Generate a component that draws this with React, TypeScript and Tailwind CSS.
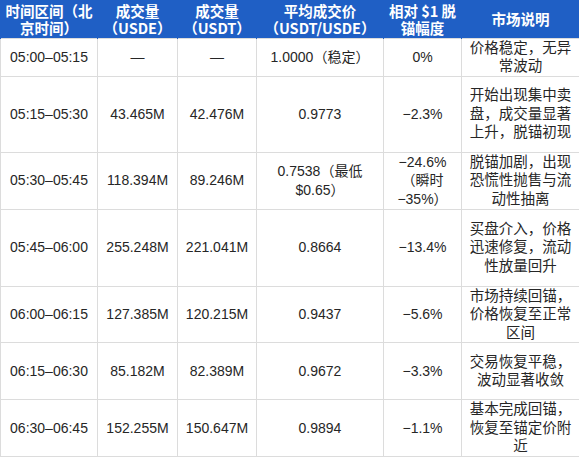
import React from "react";

type Row = {
  h: string;
  time: string;
  usde: string;
  usdt: string;
  avg: React.ReactNode;
  dev: React.ReactNode;
  desc: string;
};

const rows: Row[] = [
  { h: "h-[38px]", time: "05:00–05:15", usde: "—", usdt: "—", avg: "1.0000（稳定）", dev: "0%", desc: "价格稳定，无异常波动" },
  { h: "h-[76px]", time: "05:15–05:30", usde: "43.465M", usdt: "42.476M", avg: "0.9773", dev: "−2.3%", desc: "开始出现集中卖盘，成交量显著上升，脱锚初现" },
  { h: "h-[57px]", time: "05:30–05:45", usde: "118.394M", usdt: "89.246M", avg: "0.7538（最低$0.65）", dev: "−24.6%（瞬时−35%）", desc: "脱锚加剧，出现恐慌性抛售与流动性抽离" },
  { h: "h-[77px]", time: "05:45–06:00", usde: "255.248M", usdt: "221.041M", avg: "0.8664", dev: "−13.4%", desc: "买盘介入，价格迅速修复，流动性放量回升" },
  { h: "h-[56px]", time: "06:00–06:15", usde: "127.385M", usdt: "120.215M", avg: "0.9437", dev: "−5.6%", desc: "市场持续回锚，价格恢复至正常区间" },
  { h: "h-[57px]", time: "06:15–06:30", usde: "85.182M", usdt: "82.389M", avg: "0.9672", dev: "−3.3%", desc: "交易恢复平稳，波动显著收敛" },
  { h: "h-[56px]", time: "06:30–06:45", usde: "152.255M", usdt: "150.647M", avg: "0.9894", dev: "−1.1%", desc: "基本完成回锚，恢复至锚定价附近" },
];

const headers = [
  "时间区间（北京时间）",
  "成交量（USDE）",
  "成交量（USDT）",
  "平均成交价（USDT/USDE）",
  "相对 $1 脱锚幅度",
  "市场说明",
];

const widths = ["w-[97px]", "w-[80px]", "w-[79px]", "w-[127px]", "w-[78px]", "w-[118px]"];

export default function App() {
  const td = "border border-[#dcdcdc] text-center align-middle px-[4px] leading-[18.5px]";
  return (
    <div className="w-[579px] h-[457px] bg-white overflow-hidden" style={{ fontFamily: '"Liberation Sans", "Noto Sans CJK SC", sans-serif' }}>
      <table className="table-fixed border-collapse w-[579px] text-[14px] text-[#262626]">
        <colgroup>
          {widths.map((w, i) => (
            <col key={i} className={w} />
          ))}
        </colgroup>
        <thead>
          <tr className="h-[38px] bg-[#1f5fc5]">
            {headers.map((h, i) => (
              <th
                key={i}
                className="text-white font-bold text-[14.5px] leading-[17px] text-center align-middle px-[2px] border-x border-[#1f5fc5]"
                style={{ fontFamily: '"Noto Sans CJK SC", "Liberation Sans", sans-serif' }}
              >
                {h}
              </th>
            ))}
          </tr>
        </thead>
        <tbody>
          {rows.map((r, i) => (
            <tr key={i} className={r.h}>
              <td className={td}>{r.time}</td>
              <td className={td}>{r.usde}</td>
              <td className={td}>{r.usdt}</td>
              <td className={td}>{r.avg}</td>
              <td className={td + " px-[10px]"}>{r.dev}</td>
              <td className={td + " text-[14.5px]"}>{r.desc}</td>
            </tr>
          ))}
        </tbody>
      </table>
    </div>
  );
}
